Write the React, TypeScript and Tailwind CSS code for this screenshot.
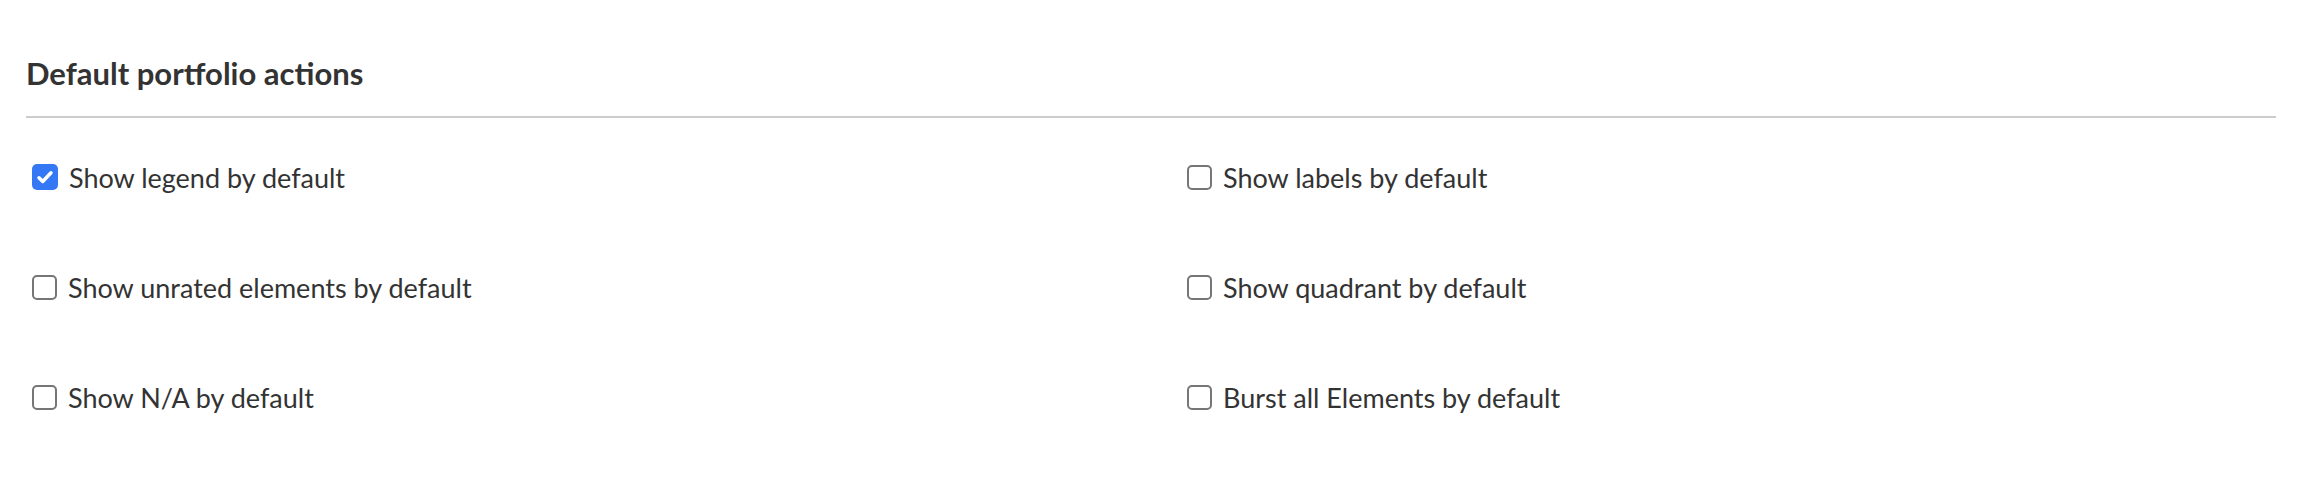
const items: [string, boolean][] = [
  ['Show legend by default', true],
  ['Show labels by default', false],
  ['Show unrated elements by default', false],
  ['Show quadrant by default', false],
  ['Show N/A by default', false],
  ['Burst all Elements by default', false],
];

function Box({ checked }: { checked: boolean }) {
  if (checked) {
    return (
      <span className="flex h-[26px] w-[26px] shrink-0 items-center justify-center rounded-[5px] bg-[#3478f6]">
        <svg width="20" height="20" viewBox="0 0 16 16" fill="none">
          <path d="M3.2 8.6l3 3L12.8 4.6" stroke="white" strokeWidth="2.8" strokeLinecap="round" strokeLinejoin="round" />
        </svg>
      </span>
    );
  }
  return <span className="h-[25px] w-[25px] shrink-0 rounded-[5px] border-2 border-[#767676] bg-white" />;
}

export default function App() {
  return (
    <div className="min-h-[496px] bg-white px-[26px] pt-[53px] font-['Source_Sans_Pro','Lato',sans-serif] text-[#333333]">
      <h2 className="text-[31px] font-bold leading-[40px]">Default portfolio actions</h2>
      <div className="mt-[23px] h-[2px] w-[2250px] bg-[#cccccc]" />
      <div className="mt-[46px] grid grid-cols-[1155px_1fr] gap-y-[84px] pl-[6px]">
        {items.map(([label, checked]) => (
          <label key={label} className="flex h-[26px] items-center gap-[11px] text-[27px] leading-none">
            <Box checked={checked} />
            <span>{label}</span>
          </label>
        ))}
      </div>
    </div>
  );
}
